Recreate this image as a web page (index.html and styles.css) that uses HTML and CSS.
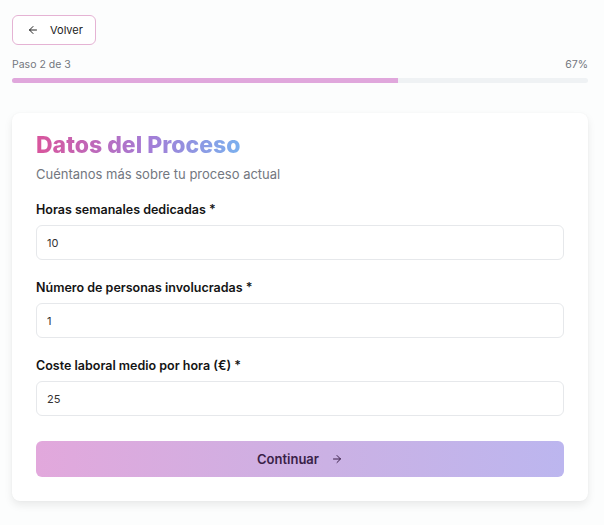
FILE: index.html
```html
<!DOCTYPE html>
<html lang="es">
<head>
    <meta charset="UTF-8">
    <meta name="viewport" content="width=device-width, initial-scale=1.0">
    <title>Datos del Proceso</title>
    <link rel="stylesheet" href="styles.css">
</head>
<body>
    <div class="page">
        <button class="back-btn" type="button">
            <svg width="12" height="12" viewBox="0 0 24 24" fill="none" stroke="currentColor" stroke-width="2" stroke-linecap="round" stroke-linejoin="round"><path d="M19 12H5"/><path d="M12 19l-7-7 7-7"/></svg>
            <span>Volver</span>
        </button>

        <!-- progreso del formulario -->
        <div class="progress">
            <div class="progress-info">
                <span>Paso 2 de 3</span>
                <span>67%</span>
            </div>
            <div class="progress-track">
                <div class="progress-fill" style="width: 67%"></div>
            </div>
        </div>

        <section class="card">
            <h1 class="card-title">Datos del Proceso</h1>
            <p class="card-subtitle">Cuéntanos más sobre tu proceso actual</p>

            <form class="form">
                <div class="field">
                    <label for="horas">Horas semanales dedicadas *</label>
                    <input id="horas" type="text" value="10">
                </div>
                <div class="field">
                    <label for="personas">Número de personas involucradas *</label>
                    <input id="personas" type="text" value="1">
                </div>
                <div class="field">
                    <label for="coste">Coste laboral medio por hora (€) *</label>
                    <input id="coste" type="text" value="25">
                </div>

                <button class="submit-btn" type="button">
                    <span>Continuar</span>
                    <svg width="12" height="12" viewBox="0 0 24 24" fill="none" stroke="currentColor" stroke-width="2" stroke-linecap="round" stroke-linejoin="round"><path d="M5 12h14"/><path d="M12 5l7 7-7 7"/></svg>
                </button>
            </form>
        </section>
    </div>
</body>
</html>
```

FILE: styles.css
```css
body {
    margin: 0;
    padding: 0;
    background-color: #fcfdfd;
    font-family: 'Inter', 'Noto Sans', sans-serif;
    color: #1a1a1a;
}

.page {
    padding: 15px 16px 24px 12px;
}

.back-btn {
    display: flex;
    align-items: center;
    gap: 11px;
    height: 30px;
    padding: 0 12px 0 14px;
    background-color: #ffffff;
    border: 1px solid #e5b3d4;
    border-radius: 6px;
    font-family: inherit;
    font-size: 11px;
    font-weight: 400;
    color: #222;
    cursor: pointer;
}

.progress {
    margin-top: 13px;
}

.progress-info {
    display: flex;
    justify-content: space-between;
    font-size: 10.5px;
    color: #73777e;
}

.progress-track {
    margin-top: 7px;
    height: 5px;
    background-color: #eff2f4;
    border-radius: 3px;
    overflow: hidden;
}

.progress-fill {
    height: 100%;
    background-color: #e0a7dc;
}

.card {
    margin-top: 30px;
    padding: 17px 24px 24px 24px;
    background-color: #ffffff;
    border-radius: 8px;
    box-shadow: 0 4px 8px rgba(0, 0, 0, 0.08), 0 0 2px rgba(0, 0, 0, 0.04);
}

.card-title {
    margin: 0;
    display: inline-block;
    font-size: 23px;
    font-weight: 800;
    line-height: 30px;
    background: linear-gradient(90deg, #d9559c, #a47cd6 55%, #7bb0ee);
    -webkit-background-clip: text;
    background-clip: text;
    color: transparent;
}

.card-subtitle {
    margin: 6px 0 0 0;
    font-size: 13px;
    color: #737780;
}

.form {
    margin-top: 20px;
    display: flex;
    flex-direction: column;
}

.field {
    display: flex;
    flex-direction: column;
    gap: 8px;
    margin-bottom: 20px;
}

.field label {
    font-size: 12.5px;
    font-weight: 600;
    color: #141414;
}

.field input {
    height: 35px;
    box-sizing: border-box;
    padding: 0 10px;
    border: 1px solid #e6e8eb;
    border-radius: 6px;
    font-family: inherit;
    font-size: 11px;
    color: #333;
    background-color: #ffffff;
}

.submit-btn {
    margin-top: 5px;
    height: 36px;
    display: flex;
    align-items: center;
    justify-content: center;
    gap: 12px;
    border: none;
    border-radius: 6px;
    background: linear-gradient(90deg, #e2a8dc, #cbb1e4 55%, #bcb6ef);
    font-family: inherit;
    font-size: 13px;
    font-weight: 600;
    color: #3a1f48;
    cursor: pointer;
}
```
